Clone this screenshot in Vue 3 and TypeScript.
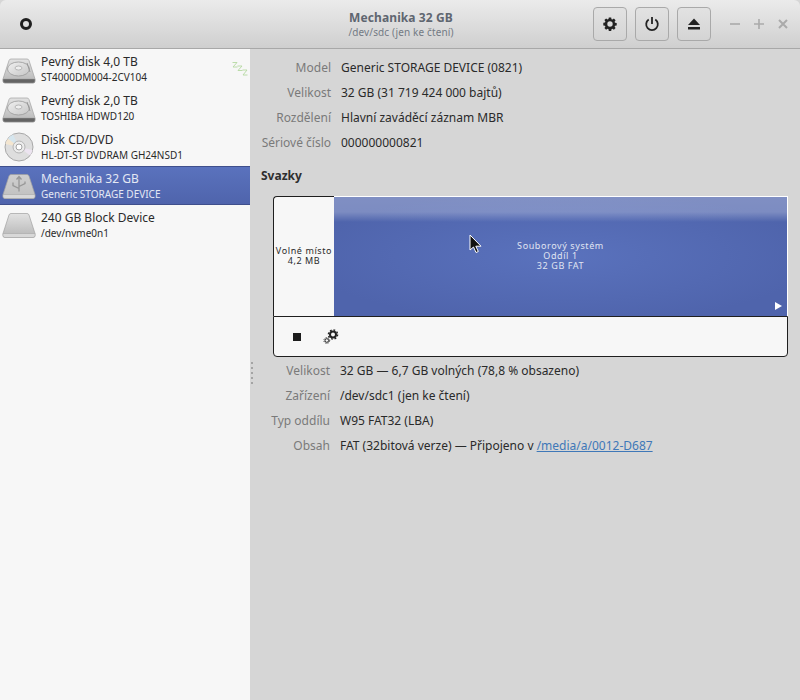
<template>
  <div class="window">
    <svg class="defs" width="0" height="0">
      <defs>
        <linearGradient id="bodyGrad" x1="0" y1="0" x2="0" y2="1">
          <stop offset="0" stop-color="#e2e2e2" />
          <stop offset="1" stop-color="#b6b6b6" />
        </linearGradient>
        <linearGradient id="usbGrad" x1="0" y1="0" x2="0" y2="1">
          <stop offset="0" stop-color="#cfcfcf" />
          <stop offset="1" stop-color="#c0c0c0" />
        </linearGradient>
        <linearGradient id="platterGrad" x1="0" y1="0" x2="1" y2="1">
          <stop offset="0" stop-color="#f0f0f0" />
          <stop offset="1" stop-color="#c6c6c6" />
        </linearGradient>
      </defs>
    </svg>

    <header class="titlebar">
      <div class="left">
        <span class="menu-dot"></span>
      </div>
      <div class="title">
        <div class="title-main">Mechanika 32 GB</div>
        <div class="title-sub">/dev/sdc (jen ke čtení)</div>
      </div>
      <div class="right">
        <button class="tool">
          <svg width="16" height="16" viewBox="0 0 16 16">
            <path fill="#222" fill-rule="evenodd" d="M6.8 1.500h2.400l.3 1.700 1 .4 1.400-1 1.700 1.700-1 1.400.4 1 1.700.3v2.400l-1.700.3-.4 1 1 1.400-1.700 1.700-1.400-1-1 .4-.3 1.700H6.800l-.3-1.700-1-.4-1.400 1-1.700-1.700 1-1.400-.4-1-1.700-.3V6.800l1.700-.3.4-1-1-1.400 1.700-1.700 1.400 1 1-.4zM8 5.300a2.700 2.700 0 1 0 0 5.400 2.700 2.700 0 0 0 0-5.400z" />
          </svg>
        </button>
        <button class="tool">
          <svg width="16" height="16" viewBox="0 0 16 16" fill="none" stroke="#222" stroke-width="1.800">
            <path d="M8 1v7" />
            <path d="M4.700 3.600a5.800 5.800 0 1 0 6.600 0" />
          </svg>
        </button>
        <button class="tool">
          <svg width="16" height="16" viewBox="0 0 16 16" fill="#222">
            <path d="M8 2.500l6 6.500H2z" />
            <rect x="2" y="11" width="12" height="2.500" />
          </svg>
        </button>
        <div class="win-controls">
          <svg width="12" height="12" viewBox="0 0 12 12" stroke="#aaa" stroke-width="1.600">
            <path d="M1 6h10" />
          </svg>
          <svg width="12" height="12" viewBox="0 0 12 12" stroke="#aaa" stroke-width="1.600">
            <path d="M1 6h10M6 1v10" />
          </svg>
          <svg width="12" height="12" viewBox="0 0 12 12" stroke="#aaa" stroke-width="2">
            <path d="M2 2l8 8M10 2l-8 8" />
          </svg>
        </div>
      </div>
    </header>

    <div class="body">
      <aside class="sidebar">
        <div v-for="d in drives" :key="d.name" class="drive" :class="{ selected: d.selected }">
          <svg class="drive-icon" width="34" height="32" viewBox="0 0 34 32">
            <template v-if="d.kind === 'cd'">
              <circle cx="17" cy="16" r="14" fill="#dedede" stroke="#a8a8a8" />
              <path d="M17 16L6 7.500A14 14 0 0 0 3.500 13z" fill="#f4e6d0" />
              <path d="M17 16L11 3.500A14 14 0 0 0 6 7.500z" fill="#d6e6ee" />
              <path d="M17 16L28 24.500A14 14 0 0 0 30.500 19z" fill="#ece4f0" />
              <circle cx="17" cy="16" r="6" fill="#ececec" stroke="#b4b4b4" />
              <circle cx="17" cy="16" r="3" fill="#fff" stroke="#a4a4a4" />
            </template>
            <template v-else>
              <g :transform="d.kind === 'hdd' ? '' : 'translate(0 -1.5)'">
                <path
                  d="M7 7.500Q7.500 6 9 6H25Q26.500 6 27 7.500L33 26V28Q33 30 31 30H3Q1 30 1 28V26Z"
                  :fill="d.kind === 'usb' ? 'url(#usbGrad)' : 'url(#bodyGrad)'"
                  stroke="#a0a0a0"
                  stroke-width="0.700"
                />
                <path
                  d="M1 26H33V28Q33 30 31 30H3Q1 30 1 28Z"
                  :fill="d.kind === 'hdd' ? '#646464' : '#d8d8d8'"
                  stroke="#a0a0a0"
                  stroke-width="0.500"
                />
                <template v-if="d.kind === 'hdd'">
                  <ellipse cx="16.500" cy="16" rx="11" ry="7" fill="url(#platterGrad)" stroke="#999" stroke-width="0.800" />
                  <ellipse cx="16.500" cy="15" rx="3.500" ry="2" fill="#eeeeee" stroke="#a0a0a0" stroke-width="0.700" />
                  <path d="M25 10l3 9" stroke="#999" stroke-width="1" />
                </template>
                <path
                  v-if="d.kind === 'usb'"
                  d="M17 8v15M14.500 11l2.500-3 2.500 3M17 20l-6-3v-3M17 18l6-3v-2"
                  fill="none"
                  stroke="#979797"
                  stroke-width="1.300"
                />
              </g>
            </template>
          </svg>
          <div class="drive-text">
            <div class="drive-name">{{ d.name }}</div>
            <div class="drive-sub">{{ d.sub }}</div>
          </div>
          <span v-if="d.sleeping" class="zzz">
            <svg width="16" height="14" viewBox="0 0 16 14" fill="none" stroke="#b4d8a0" stroke-width="0.900">
              <path d="M0.500 0.500h4.500L1 5h4.500M5.500 4h4.500L6 8.500h4.500M10.500 8h4.500L11 13h4.500" />
            </svg>
          </span>
        </div>
      </aside>

      <main class="content">
        <div class="grip"><i v-for="n in 5" :key="n"></i></div>

        <div class="info">
          <div v-for="r in driveInfo" :key="r[0]" class="info-row">
            <span class="label">{{ r[0] }}</span>
            <span class="value">{{ r[1] }}</span>
          </div>
        </div>

        <h2 class="section">Svazky</h2>

        <div class="volumes">
          <div class="bar">
            <div class="free">Volné místo<br />4,2 MB</div>
            <div class="partition">
              <div class="gloss"></div>
              <div class="part-label">Souborový systém<br />Oddíl 1<br />32 GB FAT</div>
              <svg class="cursor" width="14" height="20" viewBox="0 0 14 20">
                <path d="M1 1v15l3.500-3 2.500 5.500 2.300-1-2.500-5.300H12z" fill="#111" stroke="#fff" stroke-width="1" />
              </svg>
              <span class="play"></span>
            </div>
          </div>
          <div class="vol-tools">
            <span class="stop"></span>
            <svg class="gears" width="16" height="16" viewBox="0 0 16 16">
              <circle cx="10" cy="5.500" r="3" fill="none" stroke="#222" stroke-width="2" />
              <circle cx="10" cy="5.500" r="4.600" fill="none" stroke="#222" stroke-width="1.400" stroke-dasharray="1.800 1.800" />
              <circle cx="3.800" cy="11.500" r="1.800" fill="none" stroke="#222" stroke-width="1" />
              <circle cx="3.800" cy="11.500" r="2.900" fill="none" stroke="#222" stroke-width="0.900" stroke-dasharray="1.200 1.200" />
            </svg>
          </div>
        </div>

        <div class="info info-bottom">
          <div class="info-row"><span class="label">Velikost</span><span class="value">32 GB — 6,7 GB volných (78,8 % obsazeno)</span></div>
          <div class="info-row"><span class="label">Zařízení</span><span class="value">/dev/sdc1 (jen ke čtení)</span></div>
          <div class="info-row"><span class="label">Typ oddílu</span><span class="value">W95 FAT32 (LBA)</span></div>
          <div class="info-row">
            <span class="label">Obsah</span>
            <span class="value">FAT (32bitová verze) — Připojeno v <a class="mount" href="#">/media/a/0012-D687</a></span>
          </div>
        </div>
      </main>
    </div>
  </div>
</template>

<script setup lang="ts">
interface Drive {
  name: string
  sub: string
  kind: 'hdd' | 'cd' | 'usb' | 'block'
  selected?: boolean
  sleeping?: boolean
}

const drives: Drive[] = [
  { name: 'Pevný disk 4,0 TB', sub: 'ST4000DM004-2CV104', kind: 'hdd', sleeping: true },
  { name: 'Pevný disk 2,0 TB', sub: 'TOSHIBA HDWD120', kind: 'hdd' },
  { name: 'Disk CD/DVD', sub: 'HL-DT-ST DVDRAM GH24NSD1', kind: 'cd' },
  { name: 'Mechanika 32 GB', sub: 'Generic STORAGE DEVICE', kind: 'usb', selected: true },
  { name: '240 GB Block Device', sub: '/dev/nvme0n1', kind: 'block' }
]

const driveInfo = [
  ['Model', 'Generic STORAGE DEVICE (0821)'],
  ['Velikost', '32 GB (31 719 424 000 bajtů)'],
  ['Rozdělení', 'Hlavní zaváděcí záznam MBR'],
  ['Sériové číslo', '000000000821']
]
</script>

<style scoped>
.window {
  width: 800px;
  height: 700px;
  overflow: hidden;
  display: flex;
  flex-direction: column;
  background: #d6d6d6;
  font-family: "Noto Sans", sans-serif;
  font-size: 12px;
  color: #2a2a2a;
}

.defs {
  position: absolute;
}

.titlebar {
  height: 49px;
  flex: none;
  box-sizing: border-box;
  display: grid;
  grid-template-columns: 1fr auto 1fr;
  align-items: center;
  background: linear-gradient(#ebebeb, #cfcfcf);
  border-bottom: 1px solid #a8a8a8;
  border-radius: 6px 6px 0 0;
}

.left {
  padding-left: 20px;
  display: flex;
}

.menu-dot {
  width: 6px;
  height: 6px;
  border: 3px solid #1f1f1f;
  border-radius: 50%;
  background: #e0e0e0;
}

.title {
  padding-left: 2px;
  text-align: center;
  line-height: 15px;
  white-space: nowrap;
}

.title-main {
  font-weight: 700;
  color: #5f6670;
  letter-spacing: 0.1px;
  margin-top: 1px;
}

.title-sub {
  font-size: 10px;
  letter-spacing: 0.13px;
  color: #737a84;
}

.right {
  display: flex;
  align-items: center;
  justify-content: flex-end;
  gap: 8px;
  padding-right: 11px;
}

.tool {
  width: 34px;
  height: 34px;
  padding: 0;
  display: flex;
  align-items: center;
  justify-content: center;
  background: linear-gradient(#e2e2e2, #d4d4d4);
  border: 1px solid #a9a9a9;
  border-radius: 4px;
}

.win-controls {
  display: flex;
  gap: 12px;
  margin-left: 10px;
}

.body {
  flex: 1;
  display: flex;
  min-height: 0;
}

.sidebar {
  width: 250px;
  flex: none;
  background: #f7f7f7;
}

.drive {
  height: 39px;
  box-sizing: border-box;
  display: flex;
  align-items: center;
  padding-left: 2px;
  position: relative;
}

.drive.selected {
  background: linear-gradient(#5a72bd, #4f64ac);
  border-top: 1px solid #3f4f8c;
  border-bottom: 1px solid #3f4f8c;
  color: #e4e8f4;
}

.drive-icon {
  flex: none;
  margin-right: 5px;
}

.drive-text {
  padding-top: 1px;
}

.drive-name {
  font-size: 12px;
  line-height: 16px;
}

.drive-sub {
  font-size: 10px;
  line-height: 14px;
}

.zzz {
  position: absolute;
  right: 2px;
  top: 13px;
  display: flex;
}

.content {
  flex: 1;
  position: relative;
  padding: 6px 12px 0 0;
  box-sizing: border-box;
}

.grip {
  position: absolute;
  left: 1px;
  top: 313px;
  display: flex;
  flex-direction: column;
  gap: 3px;
}

.grip i {
  width: 2px;
  height: 2px;
  background: #a4a4a4;
}

.info-row {
  height: 25px;
  display: flex;
  align-items: center;
  gap: 10px;
}

.label {
  width: 81px;
  text-align: right;
  color: #7a7a7a;
  white-space: nowrap;
  flex: none;
}

.info-bottom .label {
  width: 80px;
}

.section {
  margin: 8px 0 0 11px;
  font-size: 12px;
  line-height: 25px;
  font-weight: 700;
  color: #2f2f2f;
}

.volumes {
  margin: 8px 0 0 23px;
  width: 515px;
  height: 161px;
  display: flex;
  flex-direction: column;
}

.bar {
  height: 120px;
  flex: none;
  display: flex;
}

.free {
  width: 61px;
  flex: none;
  box-sizing: border-box;
  padding-top: 49px;
  text-align: center;
  font-size: 9px;
  letter-spacing: 0.6px;
  line-height: 10px;
  white-space: nowrap;
  color: #2a2a2a;
  background: #f7f7f7;
  border-top: 1px solid #1f1f1f;
  border-left: 1px solid #1f1f1f;
  border-top-left-radius: 4px;
}

.partition {
  flex: 1;
  position: relative;
  box-sizing: border-box;
  background: radial-gradient(ellipse at 50% 50%, #5a72bd, #4f64ac 80%);
  color: #e0e5f2;
  border-top: 1px solid #fff;
  border-right: 1px solid #fff;
}

.gloss {
  position: absolute;
  left: 0;
  right: 0;
  top: 0;
  height: 25px;
  background: linear-gradient(rgba(255, 255, 255, 0.28), rgba(255, 255, 255, 0.26) 60%, rgba(255, 255, 255, 0));
}

.part-label {
  position: absolute;
  left: 0;
  right: 0;
  top: 44px;
  text-align: center;
  font-size: 9px;
  letter-spacing: 0.6px;
  line-height: 10px;
}

.cursor {
  position: absolute;
  left: 135px;
  top: 37px;
}

.play {
  position: absolute;
  right: 5px;
  bottom: 6px;
  border-left: 7px solid #fff;
  border-top: 4px solid transparent;
  border-bottom: 4px solid transparent;
}

.vol-tools {
  flex: 1;
  box-sizing: border-box;
  display: flex;
  align-items: center;
  padding-left: 19px;
  gap: 22px;
  background: #f7f7f7;
  border: 1px solid #1f1f1f;
  border-radius: 0 0 4px 4px;
}

.stop {
  width: 8px;
  height: 8px;
  background: #1c1c1c;
}

.info-bottom {
  margin-top: 1px;
}

.mount {
  color: #3f78b8;
  text-decoration: underline;
}
</style>

<style>
html,
body {
  margin: 0;
  background: #fff;
}
</style>
